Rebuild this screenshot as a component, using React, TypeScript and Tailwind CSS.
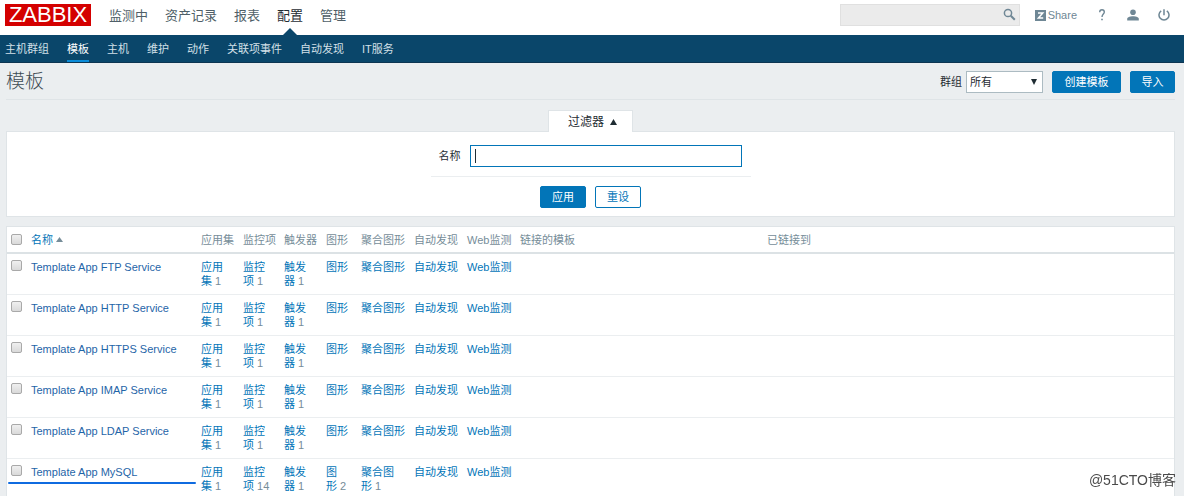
import React from 'react';
import clsx from 'clsx';

interface Template {
  name: string;
  items: number;
  graphs?: number;
  screens?: number;
}

const MAIN_MENU = ['监测中', '资产记录', '报表', '配置', '管理'];
const SUB_MENU = ['主机群组', '模板', '主机', '维护', '动作', '关联项事件', '自动发现', 'IT服务'];

const TEMPLATES: Template[] = [
  { name: 'Template App FTP Service', items: 1 },
  { name: 'Template App HTTP Service', items: 1 },
  { name: 'Template App HTTPS Service', items: 1 },
  { name: 'Template App IMAP Service', items: 1 },
  { name: 'Template App LDAP Service', items: 1 },
  { name: 'Template App MySQL', items: 14, graphs: 2, screens: 1 },
];

const HEADINGS = ['应用集', '监控项', '触发器', '图形', '聚合图形', '自动发现', 'Web监测', '链接的模板', '已链接到'];

const Checkbox: React.FC<{ label: string }> = ({ label }) => (
  <input
    type="checkbox"
    aria-label={label}
    className="block size-[11px] appearance-none rounded-[2px] border border-[#a9a9a9] bg-linear-to-b from-[#f0f0f0] to-[#d9d9d9] checked:bg-[#0275b8]"
  />
);

// The last character of the label stays on one line with its count
const CountLink: React.FC<{ label: string; count?: number }> = ({ label, count }) => {
  if (count === undefined) {
    return <a href="#" className="text-[#0275b8]">{label}</a>;
  }
  return (
    <>
      <a href="#" className="text-[#0275b8]">
        <span>{label.slice(0, -1)}</span>
        <span>{label.slice(-1)}</span>
      </a>
      <span className="text-[#768d99]">{'\u00a0'}{count}</span>
    </>
  );
};

const Header = () => (
  <header className="flex h-[35px] items-start bg-white pr-[14px] pl-[5px]">
    <a href="#" className="mt-1 flex h-[22px] w-[86px] items-center justify-center bg-[#d40000] text-[22px] leading-[22px] text-white">
      ZABBIX
    </a>
    <nav className="ml-[18px] flex h-[35px] gap-[17px] text-[13px] leading-8">
      {MAIN_MENU.map(item => (
        <a
          key={item}
          href="#"
          className={clsx('relative', item === '配置' ? 'text-[#1f2c33]' : 'text-[#4f5f68]')}
        >
          {item}
          {item === '配置' && (
            <svg className="absolute bottom-0 left-1/2 h-[7px] w-[14px] -translate-x-1/2" viewBox="0 0 14 7">
              <path d="M0 7 7 0l7 7z" fill="#0a466a" />
            </svg>
          )}
        </a>
      ))}
    </nav>
    <div className="ml-auto flex items-center pt-1 text-[#6f8795]">
      <div className="relative mr-[15px]">
        <input
          type="text"
          aria-label="搜索"
          className="block h-[22px] w-[180px] border border-[#e0e0e0] bg-[#ebebeb] px-1 text-[11px] outline-none"
        />
        <button type="button" aria-label="搜索" className="absolute top-1 right-1">
          <svg className="size-[13px]" viewBox="0 0 13 13" fill="none" stroke="currentColor">
            <circle cx="5" cy="5" r="3.6" strokeWidth="1.5" />
            <path d="m7.8 7.8 4 4" strokeWidth="2" />
          </svg>
        </button>
      </div>
      <a href="#" className="flex items-center gap-[2px] text-[11px]">
        <svg className="size-[11px]" viewBox="0 0 11 11">
          <path d="M0 0h11v11H0z" fill="currentColor" />
          <path d="M3 2.9h4.8L3.4 8.1h4.8" fill="none" stroke="#fff" strokeWidth="1.5" />
        </svg>
        Share
      </a>
      <a href="#" aria-label="帮助" className="ml-[22px]">
        <svg className="h-3 w-[6px]" viewBox="0 0 6 12" fill="none" stroke="currentColor" strokeWidth="1.4">
          <path d="M.7 3.2C.7 1.5 1.5.8 3 .8s2.3.9 2.3 2.2C5.3 5 3 5.1 3 8" />
          <path d="M3 9.7v1.6" strokeWidth="1.6" />
        </svg>
      </a>
      <a href="#" aria-label="用户" className="ml-[22px]">
        <svg className="size-3" viewBox="0 0 12 12" fill="currentColor">
          <circle cx="6" cy="3.2" r="2.8" />
          <path d="M.2 11.400V9.800C.2 8 3.200 7.200 6 7.200s5.800.8 5.800 2.600v1.600z" />
        </svg>
      </a>
      <a href="#" aria-label="退出" className="ml-[19px]">
        <svg className="size-3" viewBox="0 0 12 12" fill="none" stroke="currentColor" strokeWidth="1.5">
          <path d="M6 .3v6M3.200 1.900a5 5 0 1 0 5.600 0" />
        </svg>
      </a>
    </div>
  </header>
);

const SubNav = () => (
  <nav className="flex h-[28px] gap-[18px] border-b border-[#0d3552] bg-[#0a466a] pl-[5px] text-[11px] leading-[29px]">
    {SUB_MENU.map(item => (
      <a
        key={item}
        href="#"
        className={clsx(
          'h-[27px]',
          item === '模板' ? 'border-b-2 border-[#0a8bd8] text-white' : 'text-[#d3e0e8]'
        )}
      >
        {item}
      </a>
    ))}
  </nav>
);

const buttonBase = 'h-[22px] rounded-[2px] border border-[#0275b8] text-[11px] leading-5';

const PageTitle = () => (
  <div className="flex h-[37px] items-center border-b border-[#dfe4e7] pt-[2px]">
    <h1 className="text-[19px] leading-6 font-light text-[#3c4a52]">模板</h1>
    <div className="ml-auto flex items-center">
      <label htmlFor="group" className="mr-1">群组</label>
      <div className="relative mr-[9px]">
        <select
          id="group"
          className="block h-[22px] w-[77px] appearance-none border border-[#acbbc2] bg-white px-[3px] text-[11px] outline-none"
        >
          <option>所有</option>
        </select>
        <svg className="pointer-events-none absolute top-2 right-[6px] h-[6px] w-[6px]" viewBox="0 0 6 6">
          <path d="M0 0h6L3 6z" fill="#1f2c33" />
        </svg>
      </div>
      <button type="button" className={clsx(buttonBase, 'mr-[9px] w-[69px] bg-[#0275b8] text-white')}>创建模板</button>
      <button type="button" className={clsx(buttonBase, 'w-[45px] bg-[#0275b8] text-white')}>导入</button>
    </div>
  </div>
);

const Filter = () => (
  <section className="mt-[10px] flex flex-col items-center">
    <button
      type="button"
      className="relative z-10 -mb-px flex h-[22px] w-[85px] items-center justify-center gap-[6px] border border-b-0 border-[#dfe4e7] bg-white pl-1 text-[12px]"
    >
      过滤器
      <svg className="h-[6px] w-[7px]" viewBox="0 0 7 6">
        <path d="M0 6 3.5 0 7 6z" fill="#1f2c33" />
      </svg>
    </button>
    <form
      className="flex w-full flex-col items-center border border-[#dfe4e7] bg-white pt-[13px] pb-2"
      onSubmit={e => e.preventDefault()}
    >
      <div className="flex w-[320px] items-center border-b border-[#ebeef0] pb-[9px] pl-2">
        <label htmlFor="filter-name" className="mr-[9px]">名称</label>
        <div className="relative">
          <input
            id="filter-name"
            type="text"
            className="block h-[22px] w-[272px] border border-[#0275b8] bg-white px-1 text-[11px] caret-transparent outline-none"
          />
          <span className="absolute top-1 left-[5px] h-[14px] w-px bg-[#1f2c33]" />
        </div>
      </div>
      <div className="mt-[9px] flex gap-[9px]">
        <button type="submit" className={clsx(buttonBase, 'w-[46px] bg-[#0275b8] text-white')}>应用</button>
        <button type="reset" className={clsx(buttonBase, 'w-[46px] bg-white text-[#0275b8]')}>重设</button>
      </div>
    </form>
  </section>
);

const TemplateTable = () => (
  <div className="relative mt-[9px] border border-[#dfe4e7] bg-white">
    <table className="w-full table-fixed border-collapse">
      <colgroup>
        <col className="w-[20px]" />
        <col className="w-[170px]" />
        <col className="w-[42px]" />
        <col className="w-[41px]" />
        <col className="w-[42px]" />
        <col className="w-[35px]" />
        <col className="w-[53px]" />
        <col className="w-[53px]" />
        <col className="w-[53px]" />
        <col className="w-[247px]" />
        <col />
      </colgroup>
      <thead>
        <tr className="h-[26px] border-b-2 border-[#dce2e5] text-left text-[#768d99]">
          <th className="pl-1"><Checkbox label="全选" /></th>
          <th className="pl-1 font-normal">
            <a href="#" className="inline-flex items-center gap-[3px] text-[#0275b8]">
              名称
              <svg className="h-[5px] w-[7px]" viewBox="0 0 7 5">
                <path d="M0 5 3.5 0 7 5z" fill="#768d99" />
              </svg>
            </a>
          </th>
          {HEADINGS.map(heading => (
            <th key={heading} className="pl-1 font-normal whitespace-nowrap">{heading}</th>
          ))}
        </tr>
      </thead>
      <tbody>
        {TEMPLATES.map(template => (
          <tr key={template.name} className="border-b border-[#ebeef0] align-top *:py-[6px] *:pr-[2px] *:pl-1">
            <td><Checkbox label={template.name} /></td>
            <td><a href="#" className="text-[#1f65a8]">{template.name}</a></td>
            <td><CountLink label="应用集" count={1} /></td>
            <td><CountLink label="监控项" count={template.items} /></td>
            <td><CountLink label="触发器" count={1} /></td>
            <td><CountLink label="图形" count={template.graphs} /></td>
            <td><CountLink label="聚合图形" count={template.screens} /></td>
            <td><CountLink label="自动发现" /></td>
            <td><CountLink label="Web监测" /></td>
            <td />
            <td />
          </tr>
        ))}
      </tbody>
    </table>
    {/* Marker under the MySQL template */}
    <span className="absolute bottom-4 left-px h-[2px] w-[188px] rounded-full bg-[#0f6be0]" />
  </div>
);

const App: React.FC = () => (
  <div className="h-screen overflow-hidden bg-[#ebeef0] font-['Liberation_Sans','Noto_Sans_CJK_SC',sans-serif] text-[11px] leading-[14px] text-[#1f2c33]">
    <Header />
    <SubNav />
    <main className="pr-[9px] pl-[6px]">
      <PageTitle />
      <Filter />
      <TemplateTable />
    </main>
    <div className="fixed right-2 bottom-2 text-[14px] leading-4 text-[#4a4a4a]">@51CTO博客</div>
  </div>
);

export default App;
